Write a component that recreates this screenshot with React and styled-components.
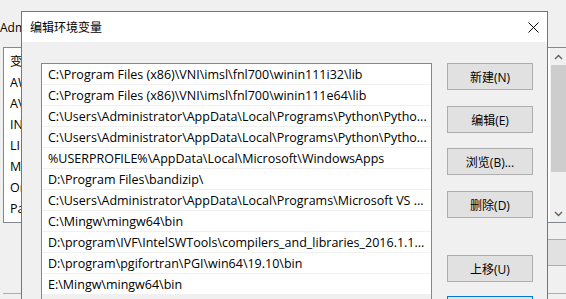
import React from 'react';
import styled, { createGlobalStyle } from 'styled-components';

const Global = createGlobalStyle`
  html, body { margin: 0; padding: 0; background: #f0f0f0; }
  body {
    width: 566px; height: 299px; overflow: hidden;
    font-family: "Open Sans", "Noto Sans CJK SC", sans-serif;
    color: #000;
  }
  #root { width: 566px; height: 299px; }
`;

const UI_FONT = `"Open Sans", "Noto Sans CJK SC", sans-serif`;

const Screen = styled.div`
  position: relative;
  width: 566px;
  height: 299px;
  overflow: hidden;
  background: #f0f0f0;
`;

/* ---------- window behind the dialog ---------- */
const BackWindow = styled.div`
  display: flex;
  flex-direction: column;
  width: 620px;
  padding-top: 20px;
`;

const BackLabel = styled.div`
  font-family: ${UI_FONT};
  font-size: 12px;
  line-height: 16px;
  white-space: nowrap;
`;

const BackList = styled.div`
  margin: 11px 0 0 3px;
  width: 565px;
  height: 176px;
  box-sizing: border-box;
  border: 1px solid #828790;
  background: #fff;
  display: flex;
  justify-content: space-between;
`;

const BackItems = styled.div`
  padding: 3px 0 0 6px;
  display: flex;
  flex-direction: column;
`;

const BackItem = styled.div`
  font-family: ${UI_FONT};
  font-size: 12.5px;
  line-height: 21px;
  height: 21px;
  white-space: nowrap;
`;

const ScrollBar = styled.div`
  width: 17px;
  display: flex;
  flex-direction: column;
  background: #f0f0f0;
`;

const ScrollArrow = styled.div`
  height: 17px;
  display: flex;
  align-items: center;
  justify-content: center;
  background: #f0f0f0;
`;

const ScrollThumb = styled.div`
  height: ${p => p.$h}px;
  background: #cdcdcd;
  margin: 0 1px;
`;

const ScrollTrack = styled.div`
  flex: 1;
`;

const BackButton = styled.div`
  margin: 16px 0 0 470px;
  width: 150px;
  height: 27px;
  box-sizing: border-box;
  border: 1px solid #adadad;
  background: #e1e1e1;
`;

const BackBox = styled.div`
  margin: 27px 0 0 3px;
  width: 565px;
  height: 30px;
  border-top: 1px solid #adadad;
`;

/* ---------- dialog ---------- */
const Dialog = styled.div`
  position: absolute;
  left: 21px;
  top: 11px;
  width: 527px;
  height: 310px;
  box-sizing: border-box;
  border: 1px solid #767676;
  background: #f0f0f0;
  display: flex;
  flex-direction: column;
`;

const TitleBar = styled.div`
  height: 30px;
  flex: none;
  background: #fff;
  display: flex;
  align-items: center;
  justify-content: space-between;
  padding-left: 8px;
`;

const Title = styled.div`
  font-family: "Noto Sans CJK SC", sans-serif;
  font-size: 12px;
  line-height: 16px;
`;

const CloseBox = styled.div`
  width: 28px;
  height: 30px;
  display: flex;
  align-items: center;
  justify-content: center;
`;

const Body = styled.div`
  flex: 1;
  display: flex;
  gap: 15px;
  padding: 21px 14px 0 19px;
  align-items: flex-start;
`;

const ListView = styled.div`
  width: 391px;
  height: 260px;
  flex: none;
  box-sizing: border-box;
  border: 1px solid #828790;
  background: #fff;
  display: flex;
  flex-direction: column;
`;

const Row = styled.div`
  height: 21px;
  flex: none;
  box-sizing: border-box;
  border-bottom: 1px solid #f0f0f0;
  padding: 1px 6px 0;
  font-family: ${UI_FONT};
  font-size: 12.5px;
  line-height: 20px;
  white-space: nowrap;
  overflow: hidden;
`;

const HScroll = styled.div`
  flex: 1;
  background: #f0f0f0;
`;

const ButtonCol = styled.div`
  width: 86px;
  flex: none;
  display: flex;
  flex-direction: column;
`;

const Btn = styled.div`
  height: 27px;
  flex: none;
  margin-top: ${p => p.$gap}px;
  box-sizing: border-box;
  border: 1px solid ${p => (p.$focus ? '#0078d7' : '#adadad')};
  background: #e1e1e1;
  display: flex;
  align-items: center;
  justify-content: center;
  font-family: ${UI_FONT};
  font-size: 12px;
  white-space: nowrap;
`;

const rows = [
  'C:\\Program Files (x86)\\VNI\\imsl\\fnl700\\winin111i32\\lib',
  'C:\\Program Files (x86)\\VNI\\imsl\\fnl700\\winin111e64\\lib',
  'C:\\Users\\Administrator\\AppData\\Local\\Programs\\Python\\Pytho...',
  'C:\\Users\\Administrator\\AppData\\Local\\Programs\\Python\\Pytho...',
  '%USERPROFILE%\\AppData\\Local\\Microsoft\\WindowsApps',
  'D:\\Program Files\\bandizip\\',
  'C:\\Users\\Administrator\\AppData\\Local\\Programs\\Microsoft VS ...',
  'C:\\Mingw\\mingw64\\bin',
  'D:\\program\\IVF\\IntelSWTools\\compilers_and_libraries_2016.1.1...',
  'D:\\program\\pgifortran\\PGI\\win64\\19.10\\bin',
  'E:\\Mingw\\mingw64\\bin',
];

const buttons = [
  { label: '新建(N)', gap: 0 },
  { label: '编辑(E)', gap: 16 },
  { label: '浏览(B)...', gap: 15 },
  { label: '删除(D)', gap: 16 },
  { label: '上移(U)', gap: 37 },
  { label: '', gap: 14, focus: true },
];

const backItems = ['变量', 'AWS', 'AV', 'INCLUDE', 'LIB', 'MSMPI', 'OneDrive', 'Path'];

const Chevron = ({ up }) => (
  <svg width="9" height="6" viewBox="0 0 9 6">
    <path
      d={up ? 'M1 5 L4.5 1.5 L8 5' : 'M1 1 L4.5 4.5 L8 1'}
      fill="none"
      stroke="#606060"
      strokeWidth="1.4"
    />
  </svg>
);

export default function App() {
  return (
    <Screen>
      <Global />
      <BackWindow>
        <BackLabel>Administrator 的用户变量(U)</BackLabel>
        <BackList>
          <BackItems>
            {backItems.map(t => (
              <BackItem key={t}>{t}</BackItem>
            ))}
          </BackItems>
          <ScrollBar>
            <ScrollArrow><Chevron up /></ScrollArrow>
            <ScrollThumb $h={107} />
            <ScrollTrack />
            <ScrollArrow><Chevron /></ScrollArrow>
          </ScrollBar>
        </BackList>
        <BackButton />
        <BackBox />
      </BackWindow>

      <Dialog>
        <TitleBar>
          <Title>编辑环境变量</Title>
          <CloseBox>
            <svg width="11" height="11" viewBox="0 0 11 11">
              <path d="M0.5 0.5 L10.5 10.5 M10.5 0.5 L0.5 10.5" stroke="#000" strokeWidth="1" />
            </svg>
          </CloseBox>
        </TitleBar>
        <Body>
          <ListView>
            {rows.map((r, i) => (
              <Row key={i}>{r}</Row>
            ))}
            <HScroll />
          </ListView>
          <ButtonCol>
            {buttons.map((b, i) => (
              <Btn key={i} $gap={b.gap} $focus={b.focus}>{b.label}</Btn>
            ))}
          </ButtonCol>
        </Body>
      </Dialog>
    </Screen>
  );
}
